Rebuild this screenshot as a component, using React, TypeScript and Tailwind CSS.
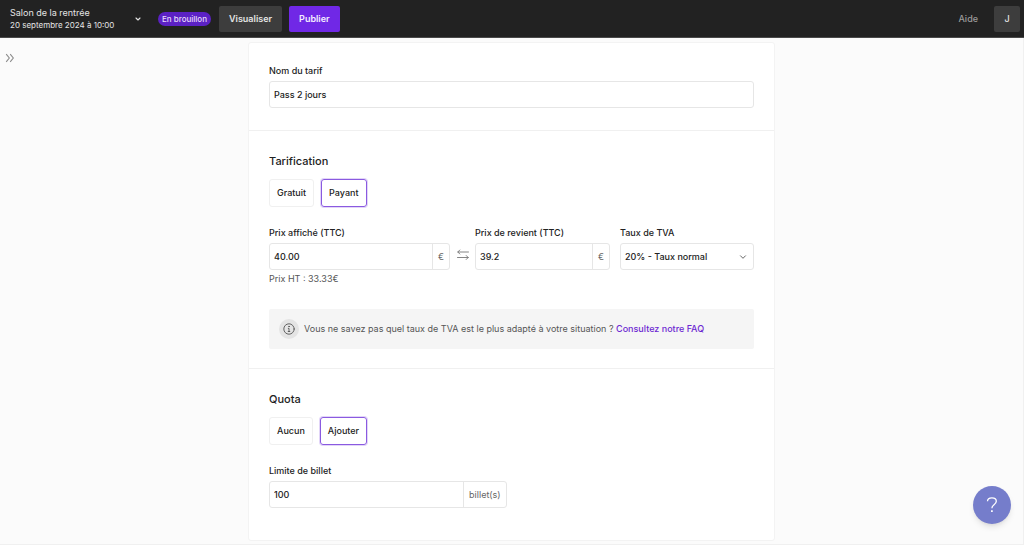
import { useId, useState, type ReactNode } from "react";

function Header() {
  return (
    <header className="flex h-[38px] items-center border-b border-[#4a4a4a] bg-[#222222] pr-1 pl-2.5 text-white">
      <button type="button" className="flex w-[132px] items-center justify-between text-left text-[#e4e4e4]">
        <span>
          <span className="block text-[9px] leading-3">Salon de la rentrée</span>
          <span className="block text-[8px] leading-3">20 septembre 2024 à 10:00</span>
        </span>
        <svg className="size-2" viewBox="0 0 8 8" fill="none" stroke="currentColor" strokeWidth="1.1" strokeLinecap="round" strokeLinejoin="round" aria-hidden="true">
          <path d="M2 3 4 5 6 3" />
        </svg>
      </button>
      <span className="ml-4 rounded-full bg-[#5b21c4] px-1 text-[8px] leading-[14px] font-medium text-[#e6dcfa]">En brouillon</span>
      <button type="button" className="ml-2 h-[26px] rounded-xs bg-[#3d3d3d] px-2.5 text-[9px] font-semibold text-[#e4e4e4]">Visualiser</button>
      <button type="button" className="ml-[7px] h-[26px] rounded-xs bg-[#7028e6] px-2.5 text-[9px] font-semibold text-[#f3ecff]">Publier</button>
      <a href="#aide" className="ml-auto text-[9px] font-medium text-[#9b9b9b]">Aide</a>
      <button type="button" className="ml-4 h-[26px] w-[26px] rounded-xs bg-[#3d3d3d] text-[9px] font-medium text-[#e4e4e4]">J</button>
    </header>
  );
}

function Section({ title, children }: { title: string; children: ReactNode }) {
  return (
    <section className="border-t border-[#f0f0f0] px-5 pt-5">
      <h2 className="text-[11px] leading-5 font-medium">{title}</h2>
      {children}
    </section>
  );
}

function Choice({ options, initial }: { options: string[]; initial: string }) {
  const [value, setValue] = useState(initial);
  return (
    <div className="mt-2 flex gap-[7px]">
      {options.map((option) => (
        <button
          key={option}
          type="button"
          aria-pressed={value === option}
          onClick={() => setValue(option)}
          className={
            value === option
              ? "h-7 rounded-[3px] border border-[#8a5ae0] px-[7px] font-medium ring-1 ring-[#e2d5f8]"
              : "h-7 rounded-[3px] border border-[#f0f0f0] px-[7px] font-medium"
          }
        >
          {option}
        </button>
      ))}
    </div>
  );
}

function Field({ label, value, unit }: { label: string; value: string; unit?: string }) {
  const id = useId();
  return (
    <div>
      <label htmlFor={id} className="block leading-3 font-medium">{label}</label>
      <div className="mt-1 flex h-[27px] rounded-[3px] border border-[#e6e6e6] bg-white">
        <input id={id} defaultValue={value} className="w-full min-w-0 flex-1 rounded-[3px] px-1 font-medium outline-none" />
        {unit && <span className="flex items-center border-l border-[#e6e6e6] px-[5px] text-[#666666]">{unit}</span>}
      </div>
    </div>
  );
}

export default function App() {
  return (
    <div className="flex min-h-screen flex-col bg-[#fbfbfb] font-['Inter',sans-serif] text-[9px] text-[#222222]">
      <Header />
      <main className="flex-1 border-r border-b border-[#f0f0f0] pt-1">
        <button type="button" aria-label="Ouvrir le menu" className="float-left mt-[11px] ml-[5px] text-[#8c8c8c]">
          <svg className="size-2.5" viewBox="0 0 10 10" fill="none" stroke="currentColor" strokeWidth="1.1" aria-hidden="true">
            <path d="M1.200 1.200 4.300 5 1.200 8.800M5.200 1.200 8.300 5 5.200 8.800" />
          </svg>
        </button>
        <form className="mx-auto max-w-[527px] rounded-[3px] border border-[#f3f3f3] bg-white" onSubmit={(e) => e.preventDefault()}>
          <div className="px-5 pt-[22px] pb-[22px]">
            <Field label="Nom du tarif" value="Pass 2 jours" />
          </div>
          <Section title="Tarification">
            <Choice options={["Gratuit", "Payant"]} initial="Payant" />
            <div className="mt-5 grid grid-cols-[minmax(0,181fr)_25px_minmax(0,135fr)_minmax(0,144fr)]">
              <div>
                <Field label="Prix affiché (TTC)" value="40.00" unit="€" />
                <p className="mt-[3px] leading-3 text-[#555555]">Prix HT : 33.33€</p>
              </div>
              <div className="flex justify-center pt-[22px]">
                <svg className="h-3 w-3" viewBox="0 0 12 12" fill="none" stroke="#777777" strokeWidth="0.9" strokeLinecap="round" strokeLinejoin="round" aria-hidden="true">
                  <path d="M11.5 3H.8M2.8 1 .8 3l2 2M.5 8.5h10.7M9.2 6.5l2 2-2 2" />
                </svg>
              </div>
              <Field label="Prix de revient (TTC)" value="39.2" unit="€" />
              <div className="pl-2.5">
                <label htmlFor="tva" className="block leading-3 font-medium">Taux de TVA</label>
                <div className="mt-1 grid items-center">
                  <select id="tva" className="col-start-1 row-start-1 h-[27px] w-full appearance-none rounded-[3px] border border-[#e6e6e6] bg-white px-1 font-medium outline-none">
                    <option>20% - Taux normal</option>
                  </select>
                  <svg className="pointer-events-none col-start-1 row-start-1 mr-[7px] size-2 justify-self-end" viewBox="0 0 8 8" fill="none" stroke="#555555" strokeWidth="0.9" strokeLinecap="round" strokeLinejoin="round" aria-hidden="true">
                    <path d="M1.5 2.8 4 5.3 6.5 2.8" />
                  </svg>
                </div>
              </div>
            </div>
            <div className="mt-6 mb-[19px] flex h-10 items-center gap-[5px] rounded-xs bg-[#f5f5f5] px-2.5 text-[#555555]">
              <span className="flex size-5 items-center justify-center rounded-full bg-[#e4e4e4]">
                <svg className="size-3" viewBox="0 0 12 12" fill="none" stroke="#555555" strokeWidth="0.9" strokeLinecap="round" aria-hidden="true">
                  <circle cx="6" cy="6" r="5.2" />
                  <path d="M5.3 5.400H6v3M5.200 8.500h1.600" />
                  <circle cx="6" cy="3.500" r=".3" fill="#555555" />
                </svg>
              </span>
              <p>
                Vous ne savez pas quel taux de TVA est le plus adapté à votre situation ?{" "}
                <a href="#faq" className="font-medium text-[#6d28d2]">Consultez notre FAQ</a>
              </p>
            </div>
          </Section>
          <Section title="Quota">
            <Choice options={["Aucun", "Ajouter"]} initial="Ajouter" />
            <div className="mt-5 w-[49%] pb-8">
              <Field label="Limite de billet" value="100" unit="billet(s)" />
            </div>
          </Section>
        </form>
      </main>
      <button type="button" aria-label="Assistance" className="fixed right-[13px] bottom-[21px] flex size-[38px] items-center justify-center rounded-full bg-[#757dcb] text-white shadow-md">
        <svg className="size-5" viewBox="0 0 20 20" fill="none" stroke="currentColor" strokeWidth="1.3" aria-hidden="true">
          <path d="M5.5 6.300C5.600 3.900 7.400 2.800 9.900 2.800c2.600 0 4.400 1.300 4.400 3.500 0 1.900-1.100 2.700-2.500 3.700-1.400 1-1.900 1.700-1.900 3.300" />
          <path d="M9.900 15.300v1.800" strokeWidth="1.700" />
        </svg>
      </button>
    </div>
  );
}
